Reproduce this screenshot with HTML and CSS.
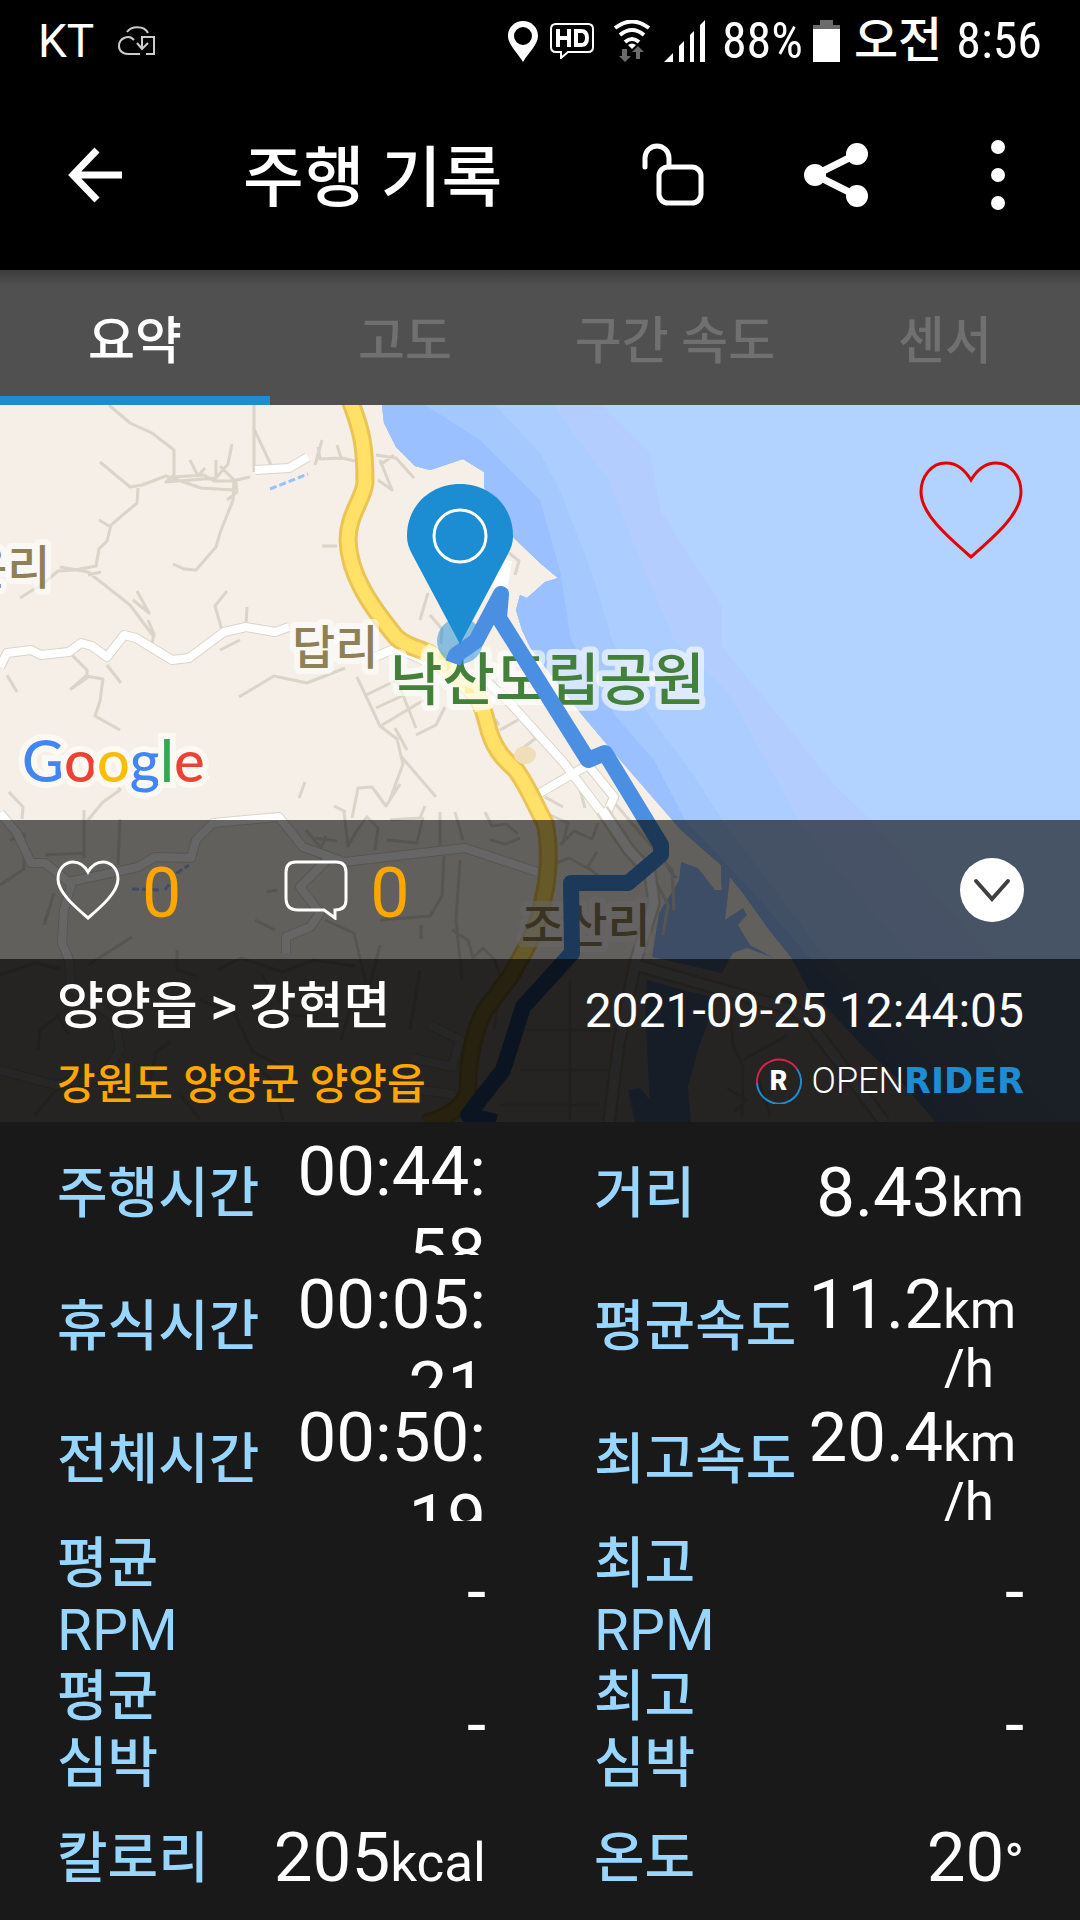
FILE: index.html
```html
<!DOCTYPE html>
<html lang="ko">
<head>
<meta charset="utf-8">
<meta name="viewport" content="width=device-width, initial-scale=1">
<title>주행 기록</title>
<link rel="stylesheet" href="styles.css">
</head>
<body>
<header class="top">
  <div class="status">
    <span class="carrier">KT</span>
    <svg class="cloud" width="37" height="30" viewBox="0 0 37 30" fill="none" stroke="#ccc" stroke-width="2">
      <path d="M9 6C13 0 26-1 30 7M16 14C11 8 1 12 1 20c0 5 4 8 9 8h12M28 28h8V11H24v11M19 17l5 6 6-6"/>
    </svg>
    <div class="status-right">
      <svg width="30" height="41" viewBox="0 0 30 41"><path fill="#fff" fill-rule="evenodd" d="M15 0C7 0 0 6 0 15c0 9 10 17 15 26 5-9 15-17 15-26C30 6 23 0 15 0zm0 6a9 9 0 1 1 0 18 9 9 0 0 1 0-18z"/></svg>
      <svg class="hd" width="44" height="36" viewBox="0 0 44 36" fill="none" stroke="#fff"><path stroke-width="2" d="M6 1h32q5 0 5 5v18q0 5-5 5H18l-7 6v-6H6q-5 0-5-5V6q0-5 5-5z"/><path stroke-width="4" d="M8 6v18M19 6v18M8 15h11M26 8h5q6 0 6 7t-6 7h-5z"/></svg>
      <svg class="wifi" width="36" height="42" viewBox="0 0 36 42"><g fill="none" stroke="#fff" stroke-width="4"><path d="M1 8q17-13 34 0M6 15q12-10 24 0M11 22q7-6 14 0"/></g><path fill="#fff" d="M14 25q4-3 8 0l-4 4z"/><path fill="#6b6b6b" d="M8 29h5v7h4l-6 6-6-6h3zM22 39v-7h-4l6-6 6 6h-4v7z"/></svg>
      <svg class="signal" width="42" height="42" viewBox="0 0 42 42"><path fill="#fff" d="M0 42l9-9v9zM15 42V26l5-5v21zM26 42V15l4-4v31zM36 42V5l5-5v42z"/></svg>
      <span class="small">88%</span>
      <svg class="battery" width="27" height="42" viewBox="0 0 27 42"><path fill="#6b6b6b" d="M7 0h13v5h7v5H0V5h7z"/><path fill="#fff" d="M0 9h27v33H0z"/></svg>
      <span class="ampm">오전</span>
      <span class="small">8:56</span>
    </div>
  </div>
  <div class="appbar">
    <button class="icon back" aria-label="뒤로"><svg width="56" height="56" viewBox="0 0 56 56" fill="none" stroke="#fff" stroke-width="7"><path d="M30 3L6 28l24 25M6 28h49"/></svg></button>
    <h1>주행 기록</h1>
    <button class="icon" aria-label="잠금 해제"><svg width="64" height="64" viewBox="0 0 64 64" fill="none" stroke="#fff" stroke-width="5" stroke-linecap="round"><path d="M3 24V15a12 12 0 0 1 24 0v9"/><rect x="17" y="24" width="42" height="36" rx="9"/></svg></button>
    <button class="icon" aria-label="공유"><svg width="64" height="64" viewBox="0 0 64 64"><path d="M53 11L11 32l42 21" fill="none" stroke="#fff" stroke-width="7"/><g fill="#fff"><circle cx="53" cy="11" r="11"/><circle cx="11" cy="32" r="11"/><circle cx="53" cy="53" r="11"/></g></svg></button>
    <button class="icon" aria-label="더보기"><svg width="64" height="72" viewBox="0 0 64 72" fill="#fff"><circle cx="32" cy="8" r="7"/><circle cx="32" cy="36" r="7"/><circle cx="32" cy="64" r="7"/></svg></button>
  </div>
</header>
<nav class="tabs" role="tablist">
  <button role="tab" aria-selected="true">요약</button>
  <button role="tab" aria-selected="false">고도</button>
  <button role="tab" aria-selected="false">구간 속도</button>
  <button role="tab" aria-selected="false">센서</button>
</nav>
<main>
<section class="map">
  <svg class="map-art" viewBox="0 405 1080 717" preserveAspectRatio="xMidYMid slice" aria-label="주행 경로 지도">
    <rect y="405" width="1080" height="717" fill="#f5efe8"/>
    <!-- sea, from deep water to the shore -->
    <clipPath id="sea"><path d="M382 405L384 423L396 447L415 466L430 470L463 459L484 472L484 487L513 537L540 563L558 578L545 582L527 598L520 595L516 610L522 630L530 647L578 710L609 747L681 830L721 865L722 890L730 877L743 893L767 927L791 957L809 990L829 1010L864 1047L902 1083L936 1122H1080V405z"/></clipPath>
    <g clip-path="url(#sea)">
      <path fill="#b2d2ff" d="M380 405H1080V1122H380z"/>
      <path fill="#b3cdff" d="M380 405H602L650 453L660 510L722 607V647L760 693L836 787L871 820L940 900L1080 1050V1122H380z"/>
      <path fill="#accdff" d="M380 405H554L578 440L609 480L633 543L674 640L729 693L760 750L798 820L880 920L1060 1122H380z"/>
      <path fill="#a5c8ff" d="M380 405H495L540 453L561 493L592 573L612 640L650 717L695 777L722 820L820 950L990 1122H380z"/>
      <path fill="#9bc0ff" d="M380 405H425L480 440L540 500L560 570L571 640L616 717L654 760L685 820L760 900L950 1122H380z"/>
    </g>
    <path fill="#9bc0ff" d="M681 862L698 868L715 890H722L721 865L730 877L725 920L743 908L747 915L738 925L750 945L774 958L747 948L733 953L722 973L652 957L659 913L679 880zM647 980L691 992L712 997L710 1017L698 1050L688 1087L691 1122H635L628 1090L640 1088L650 1100L648 1070L645 1010zM664 864l14 14-4 0z"/>
    <path fill="none" stroke="#9bc0ff" stroke-width="3" stroke-dasharray="7 3" d="M270 489l38-15M132 889l30 1M165 890l12-17 12-8"/>
    <!-- lanes -->
    <g fill="none" stroke="#d9d5c8" stroke-width="3" stroke-linejoin="round">
      <path d="M109 405l21 18 22 10 22 17v25l-8 7 50-4 12-14 4-20M174 477l30-2 10 6h18l18-4M216 477v-17M190 460l8 16 7-8M220 466l16 16 1 10-10 8M100 462l30 25 12-2 24-9 35 12 33 2M138 488l-1 15-26 22-4 16-8 8-3 17-21 4-17 1-14 12-24 15M234 480l-1 20-13 33-4 14-20 23-12-1-11-5M254 405v67M253 427l18 38M318 447l2 12 22-1 13 3M322 440l-7 25M337 445l4 13M60 567l28 5 42 33 24 32M133 600l16 13-12-22M148 620l6 14-3 14M222 630l-7-24 12-15M246 625l1-18M240 640l-20 10M99 520l10 6M322 546h15M88 575l13-3"/>
      <path d="M7 675l10 17M72 655l15 15v8l-16 11 15-13 17 3-3 22-5 15 25 14M107 665l14 18M239 697l35-21 33 7 38-15M357 677l23 49 17 13 6 25-14 38M366 695l31-15 19 48M376 708l28-13M382 725l42-25M395 728l12 22M416 735l20-10 9-18M400 755l36 42M352 818l6-30 14-1 14 19 14-22M334 806l12 6M390 820l30-2 5-12M305 782l-6 16M117 785l3 5-17 12-15 18M9 792l14 15-1 12M420 620l8-27M430 615l12 14-1 15M376 455l20 3 18 20M380 460l12 30-14-10M509 553l10 8-4 14M380 465l14-10"/>
      <path d="M484 705l15 20M500 730l18-10M518 716l18 22-13 10M548 790l22-15M570 770l32 42M612 800l60 70 2 40M550 815l18 8-5 20M560 845l14-14 18 8 6-16M556 863l13-5 18 10 10-16M588 868l12 9M655 880l13 25-5 30M545 797l18 10M580 790l5 18M306 830l15 18 5-12M315 838l22 3M344 812l4 34 8-14 10-14M375 850l3-22-12-12M387 840l30 3 6-26M440 812v38M455 812l8 28M485 812l7 14 14-2 12 10M490 840l16 4 14-6"/>
      <path d="M84 810v48M45 855l38-2M118 865l2-46M10 840l14-6 0 35-24 16M44 925l10-32M267 892l10-2M255 920l20 10M325 920l29 13 12 50M370 985l10-40M380 920l50-4 12-20 2-40M460 860l-4 60 6 60M421 925v14M452 930l16 10 5 18 10-10 12 12 6 20M88 965l44-28M177 950v20l20 6M217 970l24-12 42 14 30-12 42 6M0 975l36-12 24 6M38 1050l2-20 18-14 10 18M60 1085l-25 30M150 1080l6-28 14-10M180 1095l20 24M200 1000l35 14 18 38 40 20M262 975l28 40 28 2M353 1000l-12 40M420 970l-10 60M255 1065l20 18 8 38M500 990l-6 40M510 1030h100M520 1070h90M500 1105h100M570 980v140M730 1005l3 40 10 22-1 50M743 1060l45-25M727 1088l20 12-13 12M758 1078l12 38"/>
    </g>
    <!-- white roads with their casing -->
    <g fill="none" stroke-linejoin="round">
      <g stroke="#d9d5c8" stroke-width="10">
        <path d="M0 667L7 653L31 650L41 655L69 652L81 643L92 646L107 657L124 635L136 638L172 660L189 658L224 632L246 627L275 632L289 627M375 657L396 648L427 662M255 470L289 468L308 457"/>
        <path d="M0 813L17 833L31 863H45L69 882L138 867L155 857L191 858L196 840L213 823L279 817L303 847L344 862L465 848L537 872M72 882L64 910L62 943L69 960L71 987L114 1017L120 1050L103 1077L55 1085L0 1070M327 860L300 887L320 913L310 927L286 937V953"/>
        <path d="M430 1025L460 1040L452 1067L412 1058M410 1088L455 1095M482 677L510 703L564 763L605 817M540 793L588 765L614 797L607 813"/>
      </g>
      <g stroke="#fff" stroke-width="8">
        <path d="M0 667L7 653L31 650L41 655L69 652L81 643L92 646L107 657L124 635L136 638L172 660L189 658L224 632L246 627L275 632L289 627M375 657L396 648L427 662M255 470L289 468L308 457"/>
        <path d="M0 813L17 833L31 863H45L69 882L138 867L155 857L191 858L196 840L213 823L279 817L303 847L344 862L465 848L537 872M72 882L64 910L62 943L69 960L71 987L114 1017L120 1050L103 1077L55 1085L0 1070M327 860L300 887L320 913L310 927L286 937V953"/>
        <path d="M430 1025L460 1040L452 1067L412 1058M410 1088L455 1095M482 677L510 703L564 763L605 817M540 793L588 765L614 797L607 813"/>
      </g>
      <path stroke="#d9d5c8" stroke-width="14" d="M602 810L629 850L650 873L654 903L636 960L619 1043L609 1122M636 965L712 987L795 1010L815 1030L884 1122"/>
      <path stroke="#fff" stroke-width="9" d="M602 810L629 850L650 873L654 903L636 960L619 1043L609 1122M636 965L712 987L795 1010L815 1030L884 1122"/>
      <path stroke="#fff" stroke-width="14" d="M505 560L500 590"/>
      <path stroke="#eac456" stroke-width="19" d="M350 400C362 432 365 445 365 483C363 500 348 515 348 540C349 575 370 605 396 637C410 650 425 648 434 657L465 683C484 700 484 715 487 723C493 750 505 760 516 770C530 790 535 805 545 823C551 850 548 880 543 900C538 930 525 950 510 977L485 1010C474 1030 468 1060 468 1085Q470 1110 424 1124"/>
      <path stroke="#ffe168" stroke-width="13" d="M350 400C362 432 365 445 365 483C363 500 348 515 348 540C349 575 370 605 396 637C410 650 425 648 434 657L465 683C484 700 484 715 487 723C493 750 505 760 516 770C530 790 535 805 545 823C551 850 548 880 543 900C538 930 525 950 510 977L485 1010C474 1030 468 1060 468 1085Q470 1110 424 1124"/>
      <path stroke="#fff0a8" stroke-width="18" d="M424 651L434 657L465 683C478 694 482 702 484 710"/>
      <ellipse cx="525" cy="755" rx="11" ry="9" fill="#f0deb8"/>
    </g>
    <g class="place">
      <text x="-36" y="584">운리</text>
      <text x="292" y="664">답리</text>
      <text x="521" y="942">조산리</text>
      <text class="park" x="390" y="700">낙산도립공원</text>
    </g>
    <circle cx="460" cy="641" r="23" fill="#1c8cd3" fill-opacity=".5"/>
    <path fill="none" stroke="#4a8fe2" stroke-width="16" stroke-linejoin="round" d="M453 663L456 655L476 641L501 594L499 618L588 760L605 753L661 845V855L628 883H571L572 953L523 1007L503 1070L468 1115L496 1122"/>
    <path fill="#1c8cd3" d="M460 484C431 484 407 505 407 536C407 543 409 548 412 554L460 644L508 554C511 548 513 543 513 536C513 505 489 484 460 484z"/>
    <circle cx="460" cy="536" r="26" fill="none" stroke="#fff" stroke-width="3"/>
  </svg>
  <div class="map-view">
    <button class="icon" aria-label="좋아요"><svg width="104" height="98" viewBox="0 0 104 98" fill="none" stroke="#e60000" stroke-width="3"><path d="M52 19C46 9 37 2 27 2C12 2 2 16 2 31C2 53 29 76 52 96C75 76 102 53 102 31C102 16 92 2 77 2C67 2 58 9 52 19z"/></svg></button>
    <div class="google" aria-label="Google"><span class="g-blue">G</span><span class="g-red">o</span><span class="g-yellow">o</span><span class="g-blue">g</span><span class="g-green">l</span><span class="g-red">e</span></div>
  </div>
  <div class="social">
    <button class="count"><svg width="64" height="60" viewBox="0 0 64 60" fill="none" stroke="#fff" stroke-width="3"><path d="M32 12C28 5 23 2 17 2C8 2 2 10 2 19C2 32 18 46 32 58C46 46 62 32 62 19C62 10 56 2 47 2C41 2 36 5 32 12z"/></svg><span>0</span></button>
    <button class="count"><svg width="64" height="60" viewBox="0 0 64 60" fill="none" stroke="#fff" stroke-width="3"><path d="M12 2h40q10 0 10 10v28q0 10-11 10v8L40 50H14Q2 50 2 38V12Q2 2 12 2z"/></svg><span>0</span></button>
    <button class="icon more" aria-label="펼치기"><svg width="64" height="64" viewBox="0 0 64 64"><circle cx="32" cy="32" r="32" fill="#fff"/><path d="M16 23l16 18 16-18" fill="none" stroke="#404040" stroke-width="4" stroke-linecap="round"/></svg></button>
  </div>
  <div class="info">
    <div class="route">양양읍 &gt; 강현면</div>
    <time datetime="2021-09-25T12:44:05">2021-09-25 12:44:05</time>
    <div class="region">강원도 양양군 양양읍</div>
    <div class="brand">
      <span class="badge"><svg width="46" height="46" viewBox="0 0 46 46" fill="none" stroke-width="2"><path stroke="#1c8cd3" d="M41 11A22 22 0 1 1 1 25"/><path stroke="#e0204e" d="M1 25A22 22 0 0 1 41 11"/></svg><b>R</b></span>
      <span class="open">OPEN</span><span class="rider">RIDER</span>
    </div>
  </div>
</section>
<dl class="stats">
  <div><dt>주행시간</dt><dd><span>00:44:<br>58</span></dd></div>
  <div><dt>거리</dt><dd><span>8.43</span><small>km</small></dd></div>
  <div><dt>휴식시간</dt><dd><span>00:05:<br>21</span></dd></div>
  <div><dt>평균속도</dt><dd><span>11.2</span><small class="speed">km<br>/h</small></dd></div>
  <div><dt>전체시간</dt><dd><span>00:50:<br>19</span></dd></div>
  <div><dt>최고속도</dt><dd><span>20.4</span><small class="speed">km<br>/h</small></dd></div>
  <div><dt>평균<br><span class="latin">RPM</span></dt><dd><span>-</span></dd></div>
  <div><dt>최고<br><span class="latin">RPM</span></dt><dd><span>-</span></dd></div>
  <div><dt>평균<br>심박</dt><dd><span>-</span></dd></div>
  <div><dt>최고<br>심박</dt><dd><span>-</span></dd></div>
  <div><dt>칼로리</dt><dd><span>205</span><small>kcal</small></dd></div>
  <div><dt>온도</dt><dd><span>20</span><small>°</small></dd></div>
</dl>
</main>
</body>
</html>
```
FILE: styles.css
```css
* { box-sizing: border-box; }

body {
  margin: 0;
  background: #191919;
  color: #fff;
  font-family: Roboto, "Noto Sans CJK KR", sans-serif;
}

svg { display: block; }

button {
  margin: 0;
  padding: 0;
  border: 0;
  background: none;
  color: inherit;
  font: inherit;
}

/* status bar and app bar */
.top { background: #000; }

.status {
  display: flex;
  align-items: center;
  height: 72px;
  padding: 10px 38px 0 38px;
  font-size: 46px;
  line-height: 60px;
}

.cloud { margin-left: 24px; }

.status-right {
  display: flex;
  align-items: center;
  margin-left: auto;
}

.hd { margin-left: 12px; }
.wifi { margin-left: 20px; }
.signal { margin: 0 16px 0 14px; }
.battery { margin: 0 14px 0 10px; }
.small { font-family: "Roboto Condensed", "Liberation Sans Narrow", Roboto, sans-serif; font-size: 50px; }
.ampm { margin-right: 14px; font-size: 48px; font-weight: 500; }

.appbar {
  display: flex;
  align-items: center;
  height: 198px;
  padding: 8px 50px 0 67px;
}

.appbar h1 {
  flex: 1;
  margin: 0 0 0 120px;
  padding-top: 8px;
  font-size: 66px;
  font-weight: 500;
  line-height: 80px;
}

.appbar .icon + .icon { margin-left: 98px; }

/* tabs */
.tabs {
  display: grid;
  grid-template-columns: repeat(4, 1fr);
  height: 135px;
  background: linear-gradient(#3c3c3c, #505050 16px);
  font-size: 51px;
  font-weight: 500;
}

.tabs button { padding-top: 7px; border-bottom: 9px solid transparent; color: #707070; }
.tabs [aria-selected="true"] { border-color: #1c8cd3; color: #fff; }

/* map */
.map { position: relative; }

.map-art {
  position: absolute;
  inset: 0;
  width: 100%;
  height: 100%;
}

.place {
  font-family: "Noto Sans CJK KR", sans-serif;
  font-size: 47px;
  font-weight: 500;
  fill: #8f8058;
  stroke: #fff;
  stroke-opacity: .6;
  stroke-width: 12px;
  stroke-linejoin: round;
  paint-order: stroke;
}

.park { font-size: 57px; fill: #43803a; }

.map-view, .social, .info { position: relative; }

.map-view {
  display: flex;
  flex-direction: column;
  justify-content: space-between;
  min-height: 415px;
  padding: 56px 57px 20px 22px;
}

.map-view .icon { align-self: flex-end; }

.google {
  font-family: Lato, sans-serif;
  font-size: 58px;
  font-weight: 500;
  line-height: 80px;
  -webkit-text-stroke: 12px #fcf9f3;
  paint-order: stroke fill;
}

.g-blue { color: #4285f4; }
.g-red { color: #ea4335; }
.g-yellow { color: #fbbc05; }
.g-green { color: #34a853; }

.social {
  display: flex;
  align-items: center;
  gap: 103px;
  min-height: 139px;
  padding: 0 56px;
  background: rgba(0, 0, 0, .6);
}

.count {
  display: flex;
  align-items: center;
  gap: 22px;
  color: #ffa700;
  font-size: 70px;
  line-height: 82px;
}

.count span { padding-top: 6px; }
.more { margin-left: auto; }

.info {
  display: grid;
  grid-template-columns: auto auto;
  justify-content: space-between;
  align-items: center;
  row-gap: 10px;
  min-height: 163px;
  padding: 14px 56px 12px 57px;
  background: rgba(0, 0, 0, .85);
}

.route { font-size: 51px; font-weight: 500; line-height: 68px; }
time { padding-top: 8px; font-size: 48px; line-height: 60px; }
.region { padding-top: 8px; color: #ffa700; font-size: 42px; font-weight: 500; line-height: 50px; }

.brand {
  display: flex;
  align-items: center;
  justify-self: end;
  font-size: 36px;
  line-height: 46px;
}

.badge { position: relative; margin-right: 10px; }

.badge b {
  position: absolute;
  inset: 0;
  font-size: 27px;
  font-weight: 900;
  text-align: center;
}

.open { font-weight: 300; }
.rider { color: #1c8cd3; font-family: "DejaVu Sans", sans-serif; font-size: 35px; font-weight: 700; }

/* ride figures */
.stats {
  display: grid;
  grid-template-columns: 1fr 1fr;
  grid-auto-rows: 133px;
  margin: 0;
}

.stats div {
  display: flex;
  align-items: safe center;
  justify-content: space-between;
  overflow: hidden;
  padding: 9px 54px 0 57px;
}

.stats div:nth-child(even) { padding: 9px 56px 0 54px; }

dt { color: #98d6ff; font-size: 55px; font-weight: 500; line-height: 67px; white-space: nowrap; }
.latin { font-size: 57px; font-weight: 400; }

dd {
  display: flex;
  align-items: baseline;
  margin: 0;
  font-size: 69px;
  line-height: 82px;
  text-align: right;
}

dd small { font-size: 53px; line-height: 59px; }
.speed { min-width: 81px; text-align: left; }
```
